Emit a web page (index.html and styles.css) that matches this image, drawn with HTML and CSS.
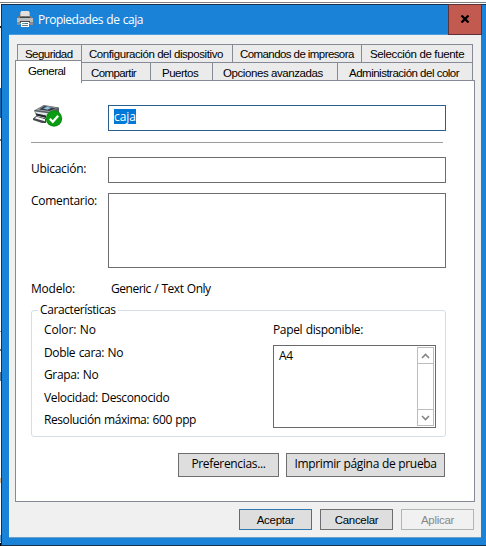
FILE: index.html
```html
<!DOCTYPE html>
<html lang="es">
<head>
<meta charset="utf-8">
<title>Propiedades de caja</title>
<link rel="stylesheet" href="styles.css">
</head>
<body>
<div class="window">
  <header class="titlebar">
    <svg class="title-icon" width="16" height="16" viewBox="0 0 16 16" shape-rendering="crispEdges">
      <path fill="#e4dfda" d="M4 0h8v6H4z"/>
      <path fill="#b5b5b5" d="M3 1h1v5H3zM12 1h1v5h-1z"/>
      <path fill="#777" d="M1 5h14v3H1z"/>
      <path fill="#3f4347" d="M3 6h10v1H3z"/>
      <path fill="#b9bdbf" d="M0 7h16v6H0z"/>
      <path fill="#8b8f92" d="M0 11h3v3H0zM13 11h3v3h-3z"/>
      <path fill="#4c4c4c" d="M3 10h10v2H3z"/>
      <path fill="#fff" d="M4 11h8v5H4z"/>
      <path fill="#58a9a5" d="M5 12h3v1H5z"/>
      <path fill="#426fae" d="M8 12h3v1H8z"/>
      <path fill="#777" d="M5 14h6v1H5z"/>
    </svg>
    <span class="title">Propiedades de caja</span>
    <button class="close" aria-label="Cerrar"><svg width="10" height="8" viewBox="0 0 10 8"><path d="M1.500 .5 8.500 7.500M8.500 .5 1.500 7.500" stroke="#000" stroke-width="2.300"/></svg></button>
  </header>
  <main class="client">
    <nav class="tabs">
      <div class="tab-row back">
        <span class="tab seguridad">Seguridad</span><span class="tab config">Configuración del dispositivo</span><span class="tab comandos">Comandos de impresora</span><span class="tab fuente">Selección de fuente</span>
      </div>
      <div class="tab-row front">
        <span class="tab active">General</span><span class="tab compartir">Compartir</span><span class="tab puertos">Puertos</span><span class="tab opciones">Opciones avanzadas</span><span class="tab color">Administración del color</span>
      </div>
    </nav>
    <section class="panel">
      <div class="name-row">
        <svg class="printer" width="32" height="24" viewBox="0 0 32 24">
          <path fill="#596065" d="M2 6.500 12 1l15 2.500v8L19 14 4 11z"/>
          <path fill="#a3abb0" d="m4 6 9-4.500 12 2.500-7 4z"/>
          <path fill="#343a3f" d="m7 5.500 5.500-3.500 11.500 2.500-6.500 2.500z"/>
          <path fill="#8fc0e2" d="m11 4.500 4-1.800 4.500 1-4 2.100z"/>
          <path fill="#e3e6e8" d="m3 7.500 15 2v4.500l-5-1v-1.500L4 9.500z"/>
          <path fill="#25292c" d="m4 9.500 10 2v2.500L4 11.500z"/>
          <path fill="#44494c" d="m1 14.500 3-2.500 10 2.500v4.500l-4 0-9-3z"/>
          <path fill="#fafafa" d="m2.500 14.200 2.300-1.400 8.200 2.400v2z"/>
          <circle cx="22" cy="14.500" r="8.200" fill="#128b18"/>
          <circle cx="22" cy="14.500" r="7.200" fill="#0a9d13"/>
          <path d="m17.800 14.700 3 3.100 5.400-6" fill="none" stroke="#fff" stroke-width="2.200"/>
        </svg>
        <div class="input focused"><span class="selection">caja</span></div>
      </div>
      <hr class="rule">
      <div class="field ubicacion"><label>Ubicación:</label><div class="input"></div></div>
      <div class="field comentario"><label>Comentario:</label><div class="input"></div></div>
      <div class="modelo"><span>Modelo:</span><span class="model-name">Generic / Text Only</span></div>
      <fieldset class="group">
        <legend>Características</legend>
        <div class="features">
          <span class="f-color">Color: No</span>
          <span>Doble cara: No</span>
          <span>Grapa: No</span>
          <span>Velocidad: Desconocido</span>
          <span class="f-res">Resolución máxima: 600 ppp</span>
        </div>
        <div class="paper">
          <span>Papel disponible:</span>
          <div class="list">
            <span class="item">A4</span>
            <div class="scrollbar">
              <div class="arrow"><svg width="9" height="6" viewBox="0 0 9 6"><path d="M1 5 4.500 1.500 8 5"/></svg></div>
              <div class="arrow down"><svg width="9" height="6" viewBox="0 0 9 6"><path d="M1 1 4.500 4.500 8 1"/></svg></div>
            </div>
          </div>
        </div>
      </fieldset>
      <div class="panel-actions">
        <button class="btn prefs">Preferencias...</button>
        <button class="btn print">Imprimir página de prueba</button>
      </div>
    </section>
    <footer class="actions">
      <button class="btn default">Aceptar</button>
      <button class="btn">Cancelar</button>
      <button class="btn disabled" disabled>Aplicar</button>
    </footer>
  </main>
</div>
</body>
</html>
```
FILE: styles.css
```css
* { box-sizing: border-box; }

html { height: 546px; overflow: hidden; }

body {
  margin: 0;
  width: 486px;
  height: 546px;
  padding: 4px 0 0 1px;
  overflow: hidden;
  font: 12px/16px "Open Sans", sans-serif;
  letter-spacing: -.36px;
  word-spacing: .7px;
  color: #000;
  white-space: nowrap;
  background:
    linear-gradient(#808080, #808080) 0 2px / 486px 1px no-repeat,
    linear-gradient(#222 0 0) 0 26px / 1px 2px no-repeat,
    linear-gradient(#1668ac 0 0) 0 88px / 1px 30px no-repeat,
    linear-gradient(#777 0 0) 0 139px / 1px 2px no-repeat,
    linear-gradient(#999 0 0) 0 331px / 1px 1px no-repeat,
    linear-gradient(#777 0 0) 0 349px / 1px 2px no-repeat,
    linear-gradient(#5c7d99 0 0) 0 372px / 1px 9px no-repeat,
    linear-gradient(#e9b98a 0 0) 0 478px / 1px 5px no-repeat,
    linear-gradient(#6fa5cf 0 0) 0 535px / 1px 7px no-repeat,
    linear-gradient(#000 0 0) 0 543px / 1px 3px no-repeat,
    #fff;
}

.window {
  height: 542px;
  padding: 0 5px 6px 7px;
  background: #1a83d8;
  border: solid #15314b;
  border-width: 1px 0 1px 1px;
}

.titlebar { display: flex; height: 29px; margin-right: -1px; }
.title-icon { margin: 6px 0 0 8px; }
.title { margin: 7px auto 0 5px; color: #fff; letter-spacing: -.48px; }

.close {
  width: 34px;
  height: 31px;
  margin-top: -1px;
  padding: 0 0 2px;
  display: grid;
  place-items: center;
  background: #c35a50;
  border: 1px solid #5b3237;
}

.client {
  height: 504px;
  padding: 9px 6px 0;
  background: #f0f0f0;
  border-top: 1px solid #4c9ce0;
  border-bottom: 1px solid #6a9fcb;
}

.tabs, .actions { font: 11.5px/14px "Liberation Sans", sans-serif; word-spacing: 0; }

.tab-row { display: flex; height: 18px; }
.back { width: 456px; margin-left: 2px; border-left: 1px solid #868a96; }
.front { width: 458px; }

.tab {
  padding: 2px 0 0 7px;
  border: solid #868a96;
  border-width: 1px 1px 0 0;
  background: #ebebeb;
}
.seguridad { width: 64px; letter-spacing: -.55px; }
.config { width: 151px; letter-spacing: -.43px; }
.comandos { width: 129px; letter-spacing: -.58px; }
.fuente { width: 111px; padding-left: 8px; letter-spacing: -.36px; }

.active {
  width: 67px;
  height: 23px;
  margin-top: -2px;
  padding: 3px 0 0 12px;
  position: relative;
  background: #fff;
  border-left-width: 1px;
  letter-spacing: -.5px;
}
.compartir { width: 69px; padding-left: 9px; letter-spacing: -.6px; }
.puertos { width: 62px; padding-left: 11px; letter-spacing: -.5px; }
.opciones { width: 125px; padding-left: 10px; letter-spacing: -.42px; }
.color { width: 135px; padding-left: 11px; letter-spacing: -.5px; }
.front .tab:not(.active) { padding-top: 3px; }

.panel {
  width: 460px;
  height: 422px;
  padding: 24px 28px 0 15px;
  background: #fff;
  border: 1px solid #868a96;
}

.name-row { display: flex; }
.printer { width: 32px; margin: -1px 44px 0 1px; }

.input { width: 338px; height: 26px; border: 1px solid #6d6d70; background: #fff; }
.focused { border-color: #285f8f; padding: 3px 0 0 5px; line-height: 15px; }
.selection {
  display: inline-block;
  height: 15px;
  background: #0078d7;
  color: #fff;
  letter-spacing: -.1px;
}

.rule { width: 412px; height: 1px; margin: 11px 0 0; border: 0; background: #9b9b9e; }

.field { display: grid; grid-template-columns: 77px 338px; }
.field label { padding-top: 4px; letter-spacing: -.3px; }
.ubicacion { margin-top: 14px; }
.comentario { margin-top: 10px; }
.comentario label { padding-top: 0; }
.comentario .input { height: 75px; }

.modelo { display: grid; grid-template-columns: 80px auto; margin-top: 13px; }
.modelo span { letter-spacing: -.22px; }
.modelo .model-name { letter-spacing: -.48px; }

.group {
  display: flex;
  width: 415px;
  height: 135px;
  margin: 5px 0 0;
  padding: 4px 0 0 12px;
  border: 1px solid #d3dfe8;
  border-radius: 3px;
}
.group legend { height: 16px; margin-left: -6px; padding: 0 2px; letter-spacing: -.4px; }

.features { display: grid; grid-auto-rows: 22.5px; width: 229px; }
.f-color { letter-spacing: -.16px; }
.f-res { letter-spacing: -.42px; }

.list {
  display: flex;
  justify-content: space-between;
  width: 163px;
  height: 83px;
  margin-top: 7px;
  padding: 1px;
  border: 1px solid #69696c;
}
.item { padding: 1px 0 0 4px; }

.scrollbar {
  display: flex;
  flex-direction: column;
  justify-content: space-between;
  width: 17px;
  border: 1px solid #bcbcbf;
}
.arrow { display: grid; place-items: center; height: 16px; border-bottom: 1px solid #bcbcbf; }
.arrow.down { border-width: 1px 0 0; border-top: 1px solid #bcbcbf; }
.arrow path { fill: none; stroke: #858588; stroke-width: 1.6; }

.panel-actions { display: flex; justify-content: flex-end; gap: 7px; margin: 16px 1px 0 0; }

.btn {
  height: 24px;
  padding: 0 0 2px;
  font: inherit;
  letter-spacing: -.34px;
  color: #000;
  background: #dedede;
  border: 1px solid #6e6e70;
}
.prefs { width: 101px; }
.print { width: 159px; word-spacing: .2px; }

.actions { display: flex; justify-content: flex-end; gap: 8px; margin-top: 7px; padding-right: 1px; }
.actions .btn { width: 73px; height: 21px; padding: 0; letter-spacing: -.3px; }
.actions .default { border-color: #3278ac; }
.actions .disabled { color: #888; background: #f1f1f1; border-color: #b0b6b6; }
```
